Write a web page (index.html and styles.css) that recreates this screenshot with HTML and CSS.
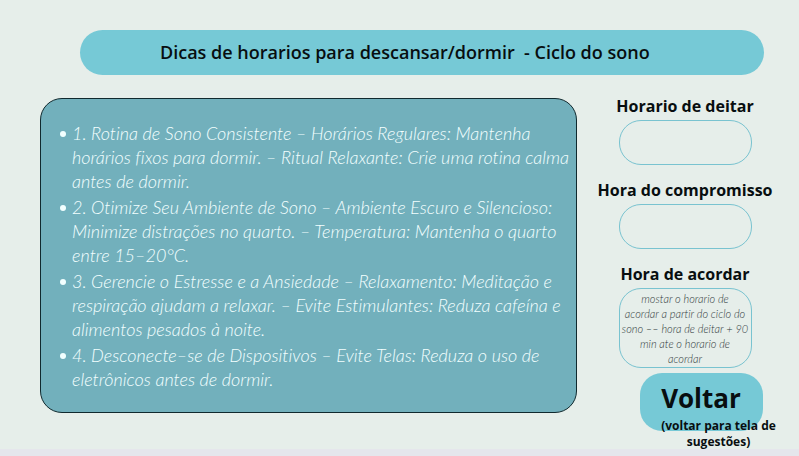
FILE: index.html
```html
<!DOCTYPE html>
<html lang="pt-BR">
<head>
<meta charset="utf-8">
<meta name="viewport" content="width=device-width, initial-scale=1">
<title>Ciclo do sono</title>
<link rel="stylesheet" href="styles.css">
</head>
<body>
<header class="banner">
  <h1 class="banner-title">Dicas de horarios para descansar/dormir&nbsp; - Ciclo do sono</h1>
</header>
<main class="content">
  <section class="tips">
    <ul class="tips-list">
      <li>1. Rotina de Sono Consistente – Horários Regulares: Mantenha<br>horários fixos para dormir. – Ritual Relaxante: Crie uma rotina calma<br>antes de dormir.</li>
      <li>2. Otimize Seu Ambiente de Sono – Ambiente Escuro e Silencioso:<br>Minimize distrações no quarto. – Temperatura: Mantenha o quarto<br>entre 15–20°C.</li>
      <li>3. Gerencie o Estresse e a Ansiedade – Relaxamento: Meditação e<br>respiração ajudam a relaxar. – Evite Estimulantes: Reduza cafeína e<br>alimentos pesados à noite.</li>
      <li>4. Desconecte–se de Dispositivos – Evite Telas: Reduza o uso de<br>eletrônicos antes de dormir.</li>
    </ul>
  </section>
  <form class="schedule">
    <div class="field">
      <label class="field-label" for="deitar">Horario de deitar</label>
      <input class="field-box" id="deitar" type="text">
    </div>
    <div class="field">
      <label class="field-label" for="compromisso">Hora do compromisso</label>
      <input class="field-box" id="compromisso" type="text">
    </div>
    <div class="field">
      <label class="field-label" for="acordar">Hora de acordar</label>
      <output class="field-box field-result" id="acordar">mostar o horario de<br>acordar a partir do ciclo do<br>sono –– hora de deitar + 90<br>min ate o horario de<br>acordar</output>
    </div>
    <div class="back">
      <button class="back-button" type="button">Voltar</button>
      <p class="back-note">(voltar para tela de sugestões)</p>
    </div>
  </form>
</main>
<footer class="strip"></footer>
</body>
</html>
```
FILE: styles.css
```css
* {
  box-sizing: border-box;
}

body {
  margin: 0;
  min-height: 100vh;
  display: flex;
  flex-direction: column;
  background: #e6eeea;
  color: #080e10;
  font-family: "Open Sans", "Noto Sans", sans-serif;
}

.banner {
  margin: 30px 35px 20px 80px;
  padding: 10px 80px;
  border-radius: 23px;
  background: #76c9d6;
}

.banner-title {
  margin: 0;
  font-size: 18px;
  line-height: 25px;
  font-weight: 600;
  white-space: nowrap;
}

.content {
  flex: 1;
  display: grid;
  grid-template-columns: 1fr 176px;
  gap: 20px;
  align-items: start;
  padding: 0 26px 0 40px;
}

.tips {
  margin-top: 3px;
  padding: 22px 0 21px 31px;
  border: 1px solid #10292e;
  border-radius: 22px;
  background: #72b0bc;
}

.tips-list {
  display: grid;
  gap: 2px;
  margin: 0;
  padding: 0;
  list-style: none;
  color: #f2ffff;
  font-family: Lato, "Open Sans", sans-serif;
  font-size: 18px;
  line-height: 24px;
  font-style: italic;
  font-weight: 300;
  font-variant-ligatures: none;
  white-space: nowrap;
}

.tips-list li {
  position: relative;
}

.tips-list li::before {
  content: "";
  position: absolute;
  left: -12px;
  top: 10px;
  width: 6px;
  height: 6px;
  border-radius: 50%;
  background: #f2ffff;
}

.schedule {
  display: flex;
  flex-direction: column;
  gap: 14px;
}

.field {
  display: flex;
  flex-direction: column;
  align-items: center;
  gap: 3px;
}

.field-label {
  font-size: 16px;
  line-height: 22px;
  font-weight: 700;
  white-space: nowrap;
}

.field-box {
  width: 133px;
  height: 45px;
  padding: 0 20px;
  border: 1px solid #79c3d0;
  border-radius: 22px;
  background: transparent;
  color: inherit;
  font: inherit;
}

.field-result {
  height: auto;
  padding: 2px 0 1px;
  color: #303a3a;
  font-family: Lato, "Open Sans", sans-serif;
  font-size: 11px;
  line-height: 15px;
  font-style: italic;
  font-weight: 300;
  font-variant-ligatures: none;
  text-align: center;
  white-space: nowrap;
}

.back {
  position: relative;
  align-self: center;
  margin: -9px 0 0 32px;
}

.back-button {
  display: block;
  width: 123px;
  height: 58px;
  padding: 0 0 8px;
  border: 0;
  border-radius: 22px;
  background: #76c9d6;
  color: inherit;
  font: inherit;
  font-size: 26px;
  font-weight: 700;
}

.back-note {
  position: absolute;
  top: 45px;
  left: 19px;
  width: 120px;
  margin: 0;
  font-size: 12px;
  line-height: 16px;
  font-weight: 700;
  text-align: center;
}

.strip {
  height: 7px;
  background: #e5e6ec;
}
```
